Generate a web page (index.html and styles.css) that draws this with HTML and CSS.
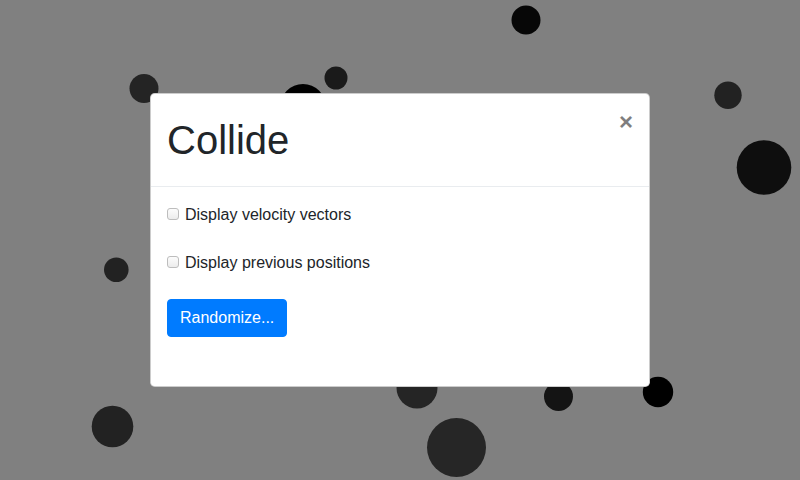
FILE: index.html
```html
<!DOCTYPE html>
<html>
<head>
<meta charset="utf-8">
<link rel="stylesheet" href="styles.css">
</head>
<body>
<svg class="stage" width="800" height="480" viewBox="0 0 800 480">
  <circle cx="526" cy="20" r="14.5" fill="#070707"/>
  <circle cx="144" cy="88.5" r="14.5" fill="#242424"/>
  <circle cx="336" cy="78" r="11.5" fill="#1a1a1a"/>
  <circle cx="303" cy="107" r="23" fill="#000"/>
  <circle cx="728" cy="95.3" r="13.7" fill="#222"/>
  <circle cx="764" cy="167.5" r="27.3" fill="#0e0e0e"/>
  <circle cx="116.3" cy="269.8" r="12.3" fill="#222"/>
  <circle cx="112.5" cy="426.5" r="20.8" fill="#222"/>
  <circle cx="417" cy="388" r="20.5" fill="#252525"/>
  <circle cx="456.5" cy="447.5" r="29.5" fill="#262626"/>
  <circle cx="558.5" cy="396.5" r="14.5" fill="#141414"/>
  <circle cx="658" cy="392" r="15.2" fill="#000"/>
</svg>
<div class="overlay">
  <div class="modal">
    <div class="modal-header">
      <h1 class="modal-title">Collide</h1>
      <button class="close" type="button">×</button>
    </div>
    <div class="modal-body">
      <div class="check-row"><input type="checkbox" id="v"><label for="v">Display velocity vectors</label></div>
      <div class="check-row"><input type="checkbox" id="p"><label for="p">Display previous positions</label></div>
      <button class="btn" type="button">Randomize...</button>
    </div>
  </div>
</div>
</body>
</html>
```
FILE: styles.css
```css
html, body {
  margin: 0;
  padding: 0;
  width: 800px;
  height: 480px;
  overflow: hidden;
  background: #808080;
  font-family: "Liberation Sans", Arial, sans-serif;
  color: #212529;
}
.stage {
  position: absolute;
  left: 0;
  top: 0;
  display: block;
}
.overlay {
  position: absolute;
  left: 0;
  top: 0;
  width: 800px;
  height: 480px;
  display: flex;
  align-items: center;
  justify-content: center;
}
.modal {
  width: 500px;
  box-sizing: border-box;
  background: #fff;
  border: 1px solid rgba(0,0,0,.2);
  border-radius: 4.8px;
}
.modal-header {
  display: flex;
  align-items: flex-start;
  padding: 16px;
  border-bottom: 1px solid #e9ecef;
}
.modal-title {
  margin: 0;
  font-size: 40px;
  font-weight: 400;
  line-height: 1.5;
}
.close {
  margin: -16px -16px -16px auto;
  padding: 16px;
  background: none;
  border: 0;
  font-family: "Liberation Sans", Arial, sans-serif;
  font-size: 24px;
  font-weight: 700;
  line-height: 1;
  color: #000;
  opacity: .5;
  text-shadow: 0 1px 0 #fff;
}
.modal-body {
  padding: 16px 16px 49px;
}
.check-row {
  display: flex;
  align-items: center;
  height: 24px;
  margin-bottom: 24px;
  font-size: 16px;
  line-height: 24px;
}
.check-row input {
  -webkit-appearance: none;
  appearance: none;
  box-sizing: border-box;
  margin: -2px 6px 0 0;
  width: 12px;
  height: 12px;
  border: 1px solid #bdbdbd;
  border-radius: 3px;
  background: linear-gradient(#fcfcfc, #ececec);
}
.btn {
  display: block;
  padding: 6px 12px;
  font-family: "Liberation Sans", Arial, sans-serif;
  font-size: 16px;
  line-height: 24px;
  color: #fff;
  background: #007bff;
  border: 1px solid #007bff;
  border-radius: 4px;
}
```
